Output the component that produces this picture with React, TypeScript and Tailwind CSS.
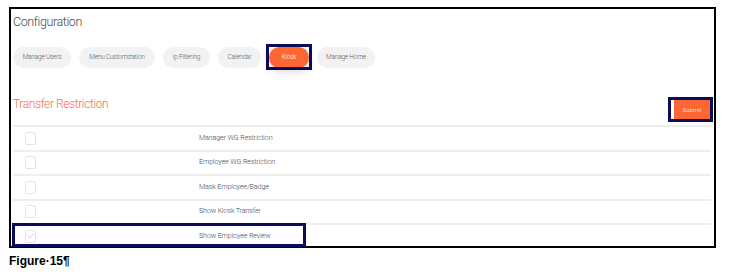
import React from "react";

const tabs = [
  { label: "Manage Users", w: "w-[58px]" },
  { label: "Menu Customization", w: "w-[76px]" },
  { label: "Ip Filtering", w: "w-[47px]" },
  { label: "Calendar", w: "w-[43px]" },
  { label: "Kiosk", w: "w-[40px]", active: true },
  { label: "Manage Home", w: "w-[58px]" },
];

const rows = [
  { label: "Manager WG Restriction", checked: false },
  { label: "Employee WG Restriction", checked: false },
  { label: "Mask Employee/Badge", checked: false },
  { label: "Show Kiosk Transfer", checked: false },
  { label: "Show Employee Review", checked: true },
];

const callout = "absolute border-[3px] border-[#0b0b5e] pointer-events-none";

export default function App() {
  return (
    <div
      className="w-[732px] h-[277px] bg-white flex flex-col pl-[9px] pt-[7px]"
      style={{ fontFamily: "Roboto, 'Noto Sans', sans-serif" }}
    >
      <div className="w-[707px] h-[241px] border-2 border-black pl-[2px] pr-[3px]">
        <div className="pt-[4px] h-[36px] text-[12.5px] font-light text-[#4a4a4a] tracking-[-0.4px]">Configuration</div>
        <div className="flex gap-[8px] h-[21px] mt-[2px]">
          {tabs.map((t) => (
            <div
              key={t.label}
              className={`relative ${t.w} h-[21px] rounded-full flex items-center justify-center text-[6.5px] font-light tracking-[-0.2px] ${
                t.active ? "bg-[#fe6633] text-white shadow-[0_3px_8px_rgba(0,0,0,0.18)]" : "bg-[#f2f2f2] text-[#5a5a5a]"
              }`}
            >
              {t.label}
              {t.active && <div className={`${callout} -left-[3px] -right-[3px] -top-[3px] -bottom-[2px]`} />}
            </div>
          ))}
        </div>
        <div className="flex justify-between items-start mt-[20px] h-[37px]">
          <div className="text-[12px] font-light text-[#f7704f] tracking-[-0.4px] pt-[8px] leading-[16px]">
            Transfer Restriction
          </div>
          <div className="relative mt-[12px] mr-[1px] w-[36px] h-[19px] bg-[#fe6633] text-white text-[6px] font-light flex items-center justify-center">
            Submit
            <div className={`${callout} -left-[6px] -right-[3px] -top-[3px] -bottom-[3px]`} />
          </div>
        </div>
        <div>
          {rows.map((r) => (
            <div key={r.label} className="relative h-[24.5px] border-t-2 border-[#eeeeee] flex items-center">
              <div className="shrink-0 w-[11px] h-[13px] ml-[12px] border border-[#e4e4e4] rounded-[2px] flex items-center justify-center">
                {r.checked && (
                  <svg width="7" height="6" viewBox="0 0 7 6">
                    <path d="M0.8 3.2 L2.7 5 L6.2 0.8" fill="none" stroke="#c8c8c8" strokeWidth="0.8" />
                  </svg>
                )}
              </div>
              <div className="ml-[163px] text-[7.2px] font-light text-[#4a4a4a] tracking-[-0.15px]">{r.label}</div>
              {r.checked && <div className={`${callout} -left-[1px] w-[294px] -top-[2px] h-[24px]`} />}
            </div>
          ))}
        </div>
      </div>
      <div
        className="mt-[6px] text-[12px] font-bold text-black leading-[14px]"
        style={{ fontFamily: "'Liberation Sans', Arial, sans-serif" }}
      >
        Figure·15¶
      </div>
    </div>
  );
}
